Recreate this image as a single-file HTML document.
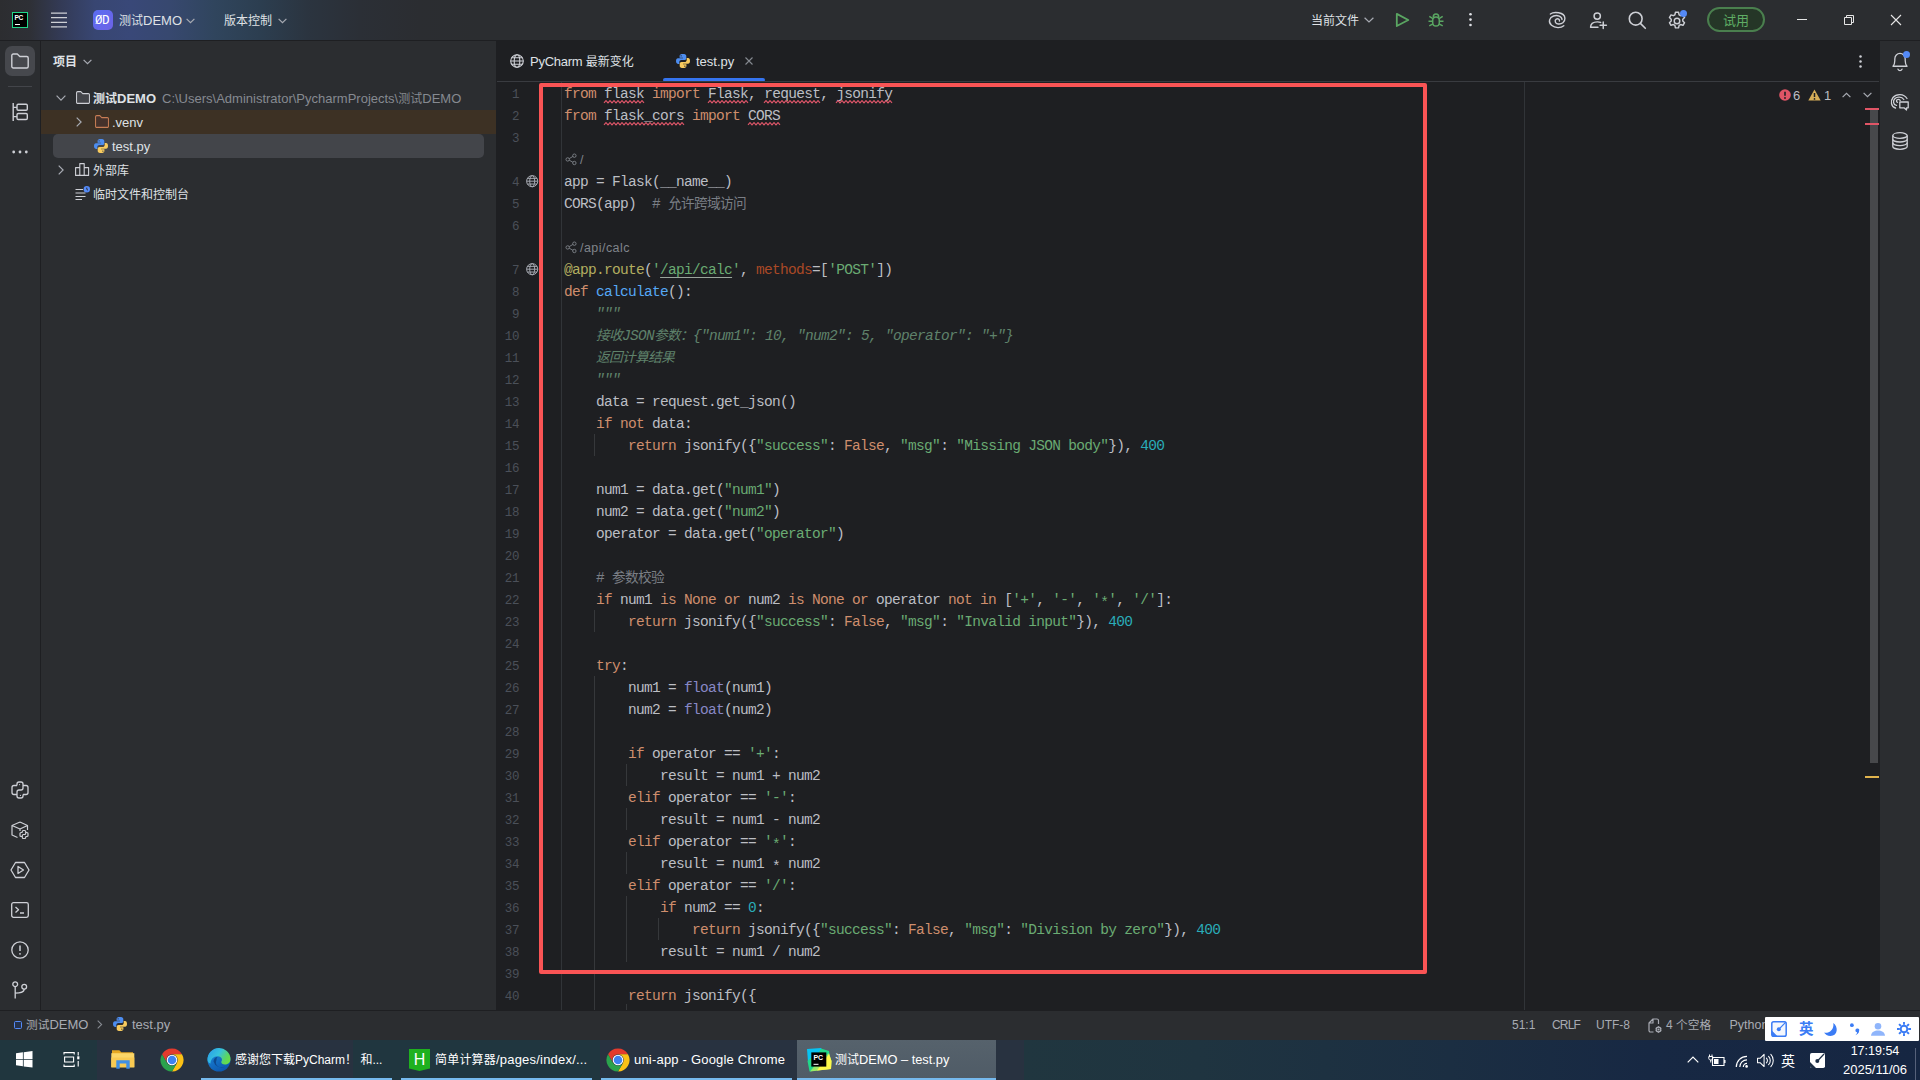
<!DOCTYPE html>
<html lang="zh-CN"><head><meta charset="utf-8"><title>测试DEMO – test.py</title>
<style>
*{box-sizing:border-box;margin:0;padding:0}
html,body{width:1920px;height:1080px;overflow:hidden;background:#1e1f22}
body{position:relative;font-family:"Liberation Sans","Noto Sans CJK SC",sans-serif;font-size:13px;color:#dfe1e5;-webkit-font-smoothing:antialiased}
.abs{position:absolute}
svg{position:absolute;overflow:visible}
.t{position:absolute;white-space:nowrap;line-height:20px}
#titlebar{position:absolute;left:0;top:0;width:1920px;height:40px;background:#2b2d30;overflow:hidden}
#titlebar .glow{position:absolute;left:0;top:0;width:480px;height:40px;background:linear-gradient(90deg,#2c2d30 0,#2e3036 30px,#333a55 60px,#384672 95px,#394878 130px,#37486f 170px,#30455d 215px,#2c3e50 260px,#2b343f 310px,#2b2f36 360px,#2b2d31 420px,#2b2d30 480px)}
#leftstripe{position:absolute;left:0;top:40px;width:41px;height:970px;background:#2b2d30;border-right:1px solid #1e1f22}
#project{position:absolute;left:41px;top:40px;width:455px;height:970px;background:#2b2d30}
#editor{position:absolute;left:496px;top:40px;width:1384px;height:970px;background:#1e1f22}
#rightstripe{position:absolute;left:1880px;top:40px;width:40px;height:970px;background:#2b2d30}
#statusbar{position:absolute;left:0;top:1010px;width:1920px;height:30px;background:#2b2d30;border-top:1px solid #1e1f22;color:#9da0a8}
#taskbar{position:absolute;left:0;top:1040px;width:1920px;height:40px;background:linear-gradient(90deg,#20363f 0,#20363f 1024px,#1f3440 1200px,#1b2e42 1450px,#172843 1650px,#162642 1920px);color:#fff;font-size:12px}
/* code */
.ln{position:absolute;left:495px;width:24px;margin-top:2px;text-align:right;font-family:"Liberation Mono",monospace;font-size:12.5px;letter-spacing:-.4px;line-height:22px;height:22px;color:#4b5059}
.cl{position:absolute;left:564px;margin-top:1px;font-family:"Liberation Mono","Noto Sans CJK SC",monospace;font-size:14.5px;letter-spacing:-.7px;line-height:22px;height:22px;white-space:pre;color:#bcbec4}
.k{color:#cf8e6d}.s{color:#6aab73}.n{color:#2aacb8}.f{color:#56a8f5}.c{color:#7a7e85}.d{color:#5f826b;font-style:italic}.b{color:#8888c6}.dec{color:#b3ae60}.p{color:#aa4926}
.w{}
.u{text-decoration:underline;text-decoration-color:#9aa59c;text-decoration-thickness:1px;text-underline-offset:3px}
.hint{position:absolute;left:564px;margin-top:1px;font-size:12.500px;letter-spacing:.45px;line-height:22px;height:22px;color:#80848b;white-space:pre}
.guide{position:absolute;width:1px;background:#36383b}
.z{font-size:12px}
#statusbar .z{font-size:11.700px}
.z2{font-size:12px}
.cj{font-size:13.7px}
#hline{position:absolute;left:0;top:40px;width:1920px;height:1px;background:#1e1f22;z-index:3}
.wave{position:absolute;height:4px;fill:none;stroke:#dd5669;stroke-width:1.150;stroke-linejoin:miter}
#trial .z{font-size:13px}
.nz .z{font-size:inherit}
.ast{position:relative;top:2.500px}

</style></head>
<body>
<div id="titlebar">
  <div class="glow"></div>
  <!-- PyCharm logo -->
  <div class="abs" style="left:12px;top:12px;width:16px;height:16px;background:#000;border:1.4px solid #21d789"></div>
  <div class="t" style="left:14.4px;top:13.6px;font-size:6.6px;line-height:8px;font-weight:700;color:#fff;letter-spacing:-.2px">PC</div>
  <div class="abs" style="left:15px;top:24px;width:5px;height:1px;background:#fff"></div>
  <!-- hamburger -->
  <svg style="left:51px;top:12px" width="16" height="16" viewBox="0 0 16 16" stroke="#ced0d6" stroke-width="1.2" fill="none"><path d="M0 1.2H16M0 5.7H16M0 10.3H16M0 14.8H16"/></svg>
  <!-- project badge -->
  <div class="abs" style="left:93px;top:10px;width:20px;height:20px;border-radius:5px;background:linear-gradient(135deg,#5a6cf2,#6d63e6)"></div>
  <div class="t" style="left:95px;top:11px;font-family:'Liberation Mono',monospace;font-size:12.500px;font-weight:400;color:#fff;letter-spacing:-.5px;line-height:20px">ØD</div>
  <div class="t" style="left:119px;top:11px;font-size:13px;color:#dfe1e5"><span class="z">测试</span>DEMO</div>
  <svg style="left:186px;top:17.500px" width="9" height="6" viewBox="0 0 9 6" stroke="#a8abb3" stroke-width="1.2" fill="none"><path d="M.6.8 4.5 4.7 8.4.8"/></svg>
  <div class="t" style="left:224px;top:11px;font-size:13px;color:#dfe1e5"><span class="z">版本控制</span></div>
  <svg style="left:278px;top:17.500px" width="9" height="6" viewBox="0 0 9 6" stroke="#a8abb3" stroke-width="1.2" fill="none"><path d="M.6.8 4.5 4.7 8.4.8"/></svg>

  <!-- right side -->
  <div class="t" style="left:1311px;top:11px;font-size:12.5px;color:#dfe1e5"><span class="z">当前文件</span></div>
  <svg style="left:1364px;top:17px" width="10" height="6" viewBox="0 0 10 6" stroke="#a8abb3" stroke-width="1.2" fill="none"><path d="M.6.7 5 5 9.4.7"/></svg>
  <!-- run -->
  <svg style="left:1395px;top:12px" width="16" height="16" viewBox="0 0 16 16" stroke="#5aa662" stroke-width="1.800" fill="none" stroke-linejoin="round"><path d="M1.800 1.900 13.300 8 1.800 14Z"/></svg>
  <!-- debug -->
  <svg style="left:1428px;top:12px" width="16" height="16" viewBox="0 0 16 16" stroke="#5aa662" stroke-width="1.500" fill="none" stroke-linecap="butt"><path d="M4.700 8.300A3.300 3.300 0 0 1 11.300 8.300V10.800A3.300 3.300 0 0 1 4.700 10.800Z"/><path d="M5.300 4.900A2.700 3 0 0 1 10.700 4.900"/><path d="M1.300 4.300 4.900 6.600M14.700 4.300 11.100 6.600M.5 9.300H4.700M15.500 9.300H11.300M1.300 13.900 4.900 11.900M14.700 13.900 11.100 11.900"/></svg>
  <!-- kebab -->
  <svg style="left:1468.500px;top:13.300px" width="3" height="14" viewBox="0 0 3 14" fill="#dfe1e5"><circle cx="1.500" cy="1.300" r="1.300"/><circle cx="1.500" cy="6.600" r="1.300"/><circle cx="1.500" cy="12" r="1.300"/></svg>
  <!-- AI swirl -->
  <svg style="left:1548px;top:12px" width="18" height="16" viewBox="0 0 18 16" stroke="#ced0d6" stroke-width="1.400" fill="none" stroke-linecap="round"><path d="M2.400 2C5.500 -.3 16.500 -.3 16.900 6.300 17.100 10.300 13.600 12.400 10.300 12 7.200 11.600 6.200 8.400 8.300 7.100 10 6.100 12 7.300 11.400 9"/><path d="M15.800 13.800C13 16.200 7 16.300 3.500 13.300 -.2 10.100 1.500 5.300 5.500 4 9.500 2.700 14 4.300 14 7.600"/></svg>
  <!-- add user -->
  <svg style="left:1589px;top:10.500px" width="19" height="19" viewBox="0 0 18 18" stroke="#ced0d6" stroke-width="1.400" fill="none" stroke-linecap="round"><circle cx="7.800" cy="4.800" r="3"/><path d="M1.500 15.500C1.500 11.500 5 10.300 8 10.300 9.300 10.300 10.300 10.500 11 10.800M1.500 15.500H8.500"/><path d="M13.500 10.500V16.500M10.500 13.500H16.500"/></svg>
  <!-- search -->
  <svg style="left:1628px;top:11px" width="18" height="18" viewBox="0 0 18 18" stroke="#ced0d6" stroke-width="1.600" fill="none" stroke-linecap="round"><circle cx="7.700" cy="7.700" r="6.400"/><path d="M12.400 12.400 17.300 17.300"/></svg>
  <!-- settings -->
  <svg style="left:1667px;top:11px" width="20" height="20" viewBox="0 0 18 18" stroke="#ced0d6" stroke-width="1.300" fill="none" stroke-linejoin="round"><circle cx="9" cy="9" r="2.500"/><path d="M7.600 1.200h2.800l.5 2.200 1.400.8 2.100-.7 1.400 2.400-1.600 1.500v1.600l1.600 1.500-1.400 2.400-2.100-.7-1.400.8-.5 2.200H7.600l-.5-2.200-1.400-.8-2.100.7-1.400-2.400 1.600-1.500V7.400L2.200 5.900l1.400-2.400 2.100.7 1.400-.8Z"/></svg>
  <div class="abs" style="left:1680px;top:10px;width:7px;height:7px;border-radius:50%;background:#548af7"></div>
  <!-- trial -->
  <div class="abs" style="left:1707px;top:7px;width:58px;height:25px;border-radius:13px;border:2px solid #4a7f4e;background:#253627"></div>
  <div class="t" id="trial" style="left:1707px;top:10.500px;width:58px;text-align:center;font-size:13px;color:#5fad65"><span class="z">试用</span></div>
  <!-- window controls -->
  <div class="abs" style="left:1797px;top:19px;width:10px;height:1px;background:#e6e6e6"></div>
  <svg style="left:1844px;top:15px" width="10" height="10" viewBox="0 0 10 10" stroke="#e6e6e6" stroke-width="1" fill="none"><path d="M.5 2.500H7.500V9.500H.5ZM2.500 2.500V.5H9.500V7.500H7.500"/></svg>
  <svg style="left:1891px;top:15px" width="10" height="10" viewBox="0 0 10 10" stroke="#e6e6e6" stroke-width="1.1" fill="none"><path d="M0 0 10 10M10 0 0 10"/></svg>
</div>

<div id="leftstripe">
  <div class="abs" style="left:5px;top:6px;width:30px;height:30px;border-radius:7px;background:#46484d"></div>
  <!-- folder -->
  <svg style="left:11px;top:13px" width="18" height="16" viewBox="0 0 18 16" stroke="#ced0d6" stroke-width="1.4" fill="none" stroke-linejoin="round"><path d="M.8 2.500A1.500 1.500 0 0 1 2.300 1H6.300L8.800 3.500H15.700A1.500 1.500 0 0 1 17.200 5V13.500A1.500 1.500 0 0 1 15.700 15H2.300A1.500 1.500 0 0 1 .8 13.500Z"/></svg>
  <div class="abs" style="left:8px;top:46px;width:24px;height:1px;background:#43454a"></div>
  <!-- structure -->
  <svg style="left:12px;top:63px" width="16" height="18" viewBox="0 0 16 18" stroke="#ced0d6" stroke-width="1.400" fill="none" stroke-linejoin="round"><path d="M1.200 0V18M1.200 4.400H5M1.200 13.600H5"/><rect x="5" y="1.300" width="10.300" height="6" rx="1.200"/><rect x="5" y="10.500" width="10.300" height="6" rx="1.200"/></svg>
  <!-- more -->
  <svg style="left:12px;top:110px" width="16" height="4" viewBox="0 0 16 4" fill="#ced0d6"><circle cx="1.700" cy="2" r="1.400"/><circle cx="8" cy="2" r="1.400"/><circle cx="14.300" cy="2" r="1.400"/></svg>

  <!-- python console -->
  <svg style="left:11px;top:741px" width="18" height="18" viewBox="0 0 18 18" stroke="#ced0d6" stroke-width="1.300" fill="none" stroke-linejoin="round"><path d="M6 4.500V3A2 2 0 0 1 8 1H10A2 2 0 0 1 12 3V7A2 2 0 0 1 10 9H8A2 2 0 0 0 6 11V15A2 2 0 0 0 8 17H10A2 2 0 0 0 12 15V13.500"/><path d="M6 4.500H3A2 2 0 0 0 1 6.500V11.500A2 2 0 0 0 3 13.500H6M12 4.500H15A2 2 0 0 1 17 6.500V11.500A2 2 0 0 1 15 13.500H12"/><circle cx="8.600" cy="3.600" r=".6" fill="#ced0d6" stroke="none"/><circle cx="9.400" cy="14.400" r=".6" fill="#ced0d6" stroke="none"/></svg>
  <!-- python packages -->
  <svg style="left:11px;top:781px" width="19" height="19" viewBox="0 0 19 19" stroke="#ced0d6" stroke-width="1.200" fill="none" stroke-linejoin="round"><path d="M9 1 16.500 4.500V9M9 1 1 4.500V14L6.500 16.500M1 4.500 9 8 16.500 4.500M9 8V10"/><path d="M11.300 11.500V10.500A1 1 0 0 1 12.300 9.500H13.700A1 1 0 0 1 14.700 10.500V12.500A1 1 0 0 1 13.700 13.500H12.300A1 1 0 0 0 11.300 14.500V16.500A1 1 0 0 0 12.300 17.500H13.700A1 1 0 0 0 14.700 16.500V15.500M11.300 11.500H10A1 1 0 0 0 9 12.500V14.500A1 1 0 0 0 10 15.500H11.300M14.700 11.500H16A1 1 0 0 1 17 12.500V14.500A1 1 0 0 1 16 15.500H14.700"/></svg>
  <!-- services -->
  <svg style="left:10px;top:821px" width="20" height="18" viewBox="0 0 20 18" stroke="#ced0d6" stroke-width="1.300" fill="none" stroke-linejoin="round"><path d="M5.500 1.500H14.500L19 9 14.500 16.500H5.500L1 9Z"/><path d="M8 5.500 13.500 9 8 12.500Z"/></svg>
  <!-- terminal -->
  <svg style="left:11px;top:862px" width="18" height="16" viewBox="0 0 18 16" stroke="#ced0d6" stroke-width="1.300" fill="none" stroke-linejoin="round"><rect x=".7" y=".7" width="16.600" height="14.600" rx="1.800"/><path d="M4.500 5 7.500 7.700 4.500 10.400M9 11H13"/></svg>
  <!-- problems -->
  <svg style="left:11px;top:901px" width="18" height="18" viewBox="0 0 18 18" stroke="#ced0d6" stroke-width="1.300" fill="none"><circle cx="9" cy="9" r="8.200"/><path d="M9 4.500V10" stroke-width="1.500"/><circle cx="9" cy="12.800" r=".9" fill="#ced0d6" stroke="none"/></svg>
  <!-- git -->
  <svg style="left:12px;top:941px" width="16" height="18" viewBox="0 0 16 18" stroke="#ced0d6" stroke-width="1.300" fill="none"><circle cx="3.200" cy="3.200" r="2.400"/><circle cx="12.200" cy="5.700" r="2.400"/><path d="M3.200 5.600V17.500M12.200 8.100C12.200 11.500 8 12.200 3.200 12.200"/></svg>
</div>

<div id="project">
  <div class="t" style="left:12px;top:12px;font-size:13px;font-weight:700;color:#dfe1e5"><span class="z">项目</span></div>
  <svg style="left:42px;top:19px" width="9" height="6" viewBox="0 0 9 6" stroke="#a8abb3" stroke-width="1.200" fill="none"><path d="M.6.8 4.500 4.700 8.400.8"/></svg>

  <!-- row 1: root -->
  <svg style="left:15px;top:55px" width="10" height="6" viewBox="0 0 10 6" stroke="#a8abb3" stroke-width="1.200" fill="none"><path d="M.6.7 5 5.100 9.400.7"/></svg>
  <svg style="left:35px;top:51px" width="14" height="13" viewBox="0 0 15 13" preserveAspectRatio="none" stroke="#ced0d6" stroke-width="1.100" fill="#43454a" stroke-linejoin="round"><path d="M.6 1.800A1.200 1.200 0 0 1 1.800.6H5.200L7.200 2.600H13.200A1.200 1.200 0 0 1 14.400 3.800V11.200A1.200 1.200 0 0 1 13.200 12.400H1.800A1.200 1.200 0 0 1 .6 11.200Z"/></svg>
  <div class="t" style="left:52px;top:49px;font-size:13px;font-weight:700;color:#dfe1e5"><span class="z">测试</span>DEMO</div>
  <div class="t" style="left:121px;top:49px;font-size:13px;color:#868a91">C:\Users\Administrator\PycharmProjects\<span class="z">测试</span>DEMO</div>

  <!-- row 2: .venv -->
  <div class="abs" style="left:0;top:70px;width:455px;height:24px;background:#3d3124"></div>
  <svg style="left:35px;top:77px" width="6" height="10" viewBox="0 0 6 10" stroke="#a8abb3" stroke-width="1.200" fill="none"><path d="M.7.6 5.100 5 .7 9.400"/></svg>
  <svg style="left:54px;top:75px" width="14" height="13" viewBox="0 0 15 13" preserveAspectRatio="none" stroke="#c77d55" stroke-width="1.100" fill="#45322b" stroke-linejoin="round"><path d="M.6 1.800A1.200 1.200 0 0 1 1.800.6H5.200L7.200 2.600H13.200A1.200 1.200 0 0 1 14.400 3.800V11.200A1.200 1.200 0 0 1 13.200 12.400H1.800A1.200 1.200 0 0 1 .6 11.200Z"/></svg>
  <div class="t" style="left:71px;top:73px;font-size:13px;color:#dfe1e5">.venv</div>

  <!-- row 3: test.py selected -->
  <div class="abs" style="left:12px;top:94px;width:431px;height:24px;border-radius:5px;background:#43454a"></div>
  <svg style="left:52px;top:98px" width="16" height="16" viewBox="0 0 16 16"><use href="#pyicon"/></svg>
  <div class="t" style="left:71px;top:97px;font-size:13px;color:#dfe1e5">test.py</div>

  <!-- row 4: external libs -->
  <svg style="left:17px;top:125px" width="6" height="10" viewBox="0 0 6 10" stroke="#a8abb3" stroke-width="1.200" fill="none"><path d="M.7.6 5.100 5 .7 9.400"/></svg>
  <svg style="left:34px;top:123px" width="15" height="13" viewBox="0 0 15 13" stroke="#ced0d6" stroke-width="1.100" fill="none" stroke-linejoin="round"><path d="M.6 4.600H4.800V12.400H.6ZM4.800.6H9.200V12.400H4.800ZM9.200 4.600H13.600V12.400H9.200Z"/></svg>
  <div class="t" style="left:52px;top:121px;font-size:13px;color:#dfe1e5"><span class="z">外部库</span></div>

  <!-- row 5: scratches -->
  <svg style="left:34px;top:146px" width="16" height="14" viewBox="0 0 16 14" stroke="#ced0d6" stroke-width="1.100" fill="none"><path d="M.5 3.500H8M.5 7H10.500M.5 10.500H10.500M.5 13.500H7"/><circle cx="11.800" cy="3.200" r="3.200" fill="#548af7" stroke="none"/><path d="M11.800 1.600V3.400L13 4.200" stroke="#2b2d30" stroke-width="1"/></svg>
  <div class="t" style="left:52px;top:145px;font-size:13px;color:#dfe1e5"><span class="z">临时文件和控制台</span></div>
</div>
<svg width="0" height="0" style="left:0;top:0"><defs>
<g id="pyicon">
<path d="M7.900 1C5.900 1 4.600 1.500 4.600 3V4.700H8V5.300H3C1.600 5.300 1 6.500 1 8.100 1 9.700 1.600 10.900 3 10.900H4.300V9.100C4.300 7.900 5.300 7 6.500 7H9.500C10.500 7 11.300 6.200 11.300 5.200V3C11.300 1.600 9.900 1 7.900 1ZM6.100 2.200A.65.650 0 1 1 6.100 3.500.65.650 0 0 1 6.100 2.200Z" fill="#4d8df0"/>
<path d="M8.100 15C10.100 15 11.400 14.500 11.400 13V11.300H8V10.700H13C14.400 10.700 15 9.500 15 7.900 15 6.300 14.400 5.100 13 5.100H11.700V6.900C11.700 8.100 10.700 9 9.500 9H6.500C5.500 9 4.700 9.800 4.700 10.800V13C4.700 14.400 6.100 15 8.100 15ZM9.900 13.800A.65.650 0 1 1 9.900 12.500.65.650 0 0 1 9.900 13.800Z" fill="#f8cb5e"/>
</g>
<g id="globe" fill="none" stroke-width="1.100"><circle cx="7" cy="7" r="6.300"/><ellipse cx="7" cy="7" rx="2.800" ry="6.300"/><path d="M.7 7H13.300M1.500 3.800H12.500M1.500 10.200H12.500"/></g>
</defs></svg>

<div id="editor">
  <!-- tabs -->
  <svg style="left:14px;top:14px" width="14" height="14" viewBox="0 0 14 14" stroke="#ced0d6"><use href="#globe"/></svg>
  <div class="t" style="left:34px;top:12px;font-size:13px;color:#dfe1e5"><span style="letter-spacing:-.25px">PyCharm </span><span class="z">最新变化</span></div>
  <svg style="left:179px;top:13px" width="16" height="16" viewBox="0 0 16 16"><use href="#pyicon"/></svg>
  <div class="t" style="left:200px;top:12px;font-size:13px;color:#dfe1e5">test.py</div>
  <svg style="left:249px;top:17px" width="8" height="8" viewBox="0 0 8 8" stroke="#868a91" stroke-width="1.100" fill="none"><path d="M.5.5 7.500 7.500M7.500.5 .5 7.500"/></svg>
  <div class="abs" style="left:167px;top:38px;width:102px;height:4px;border-radius:2px;background:#3574f0"></div>
  <div class="abs" style="left:1px;top:41px;width:1382px;height:1px;background:#393b40"></div>
  <!-- tab kebab -->
  <svg style="left:1362.500px;top:14.700px" width="3" height="13" viewBox="0 0 3 13" fill="#ced0d6"><circle cx="1.500" cy="1.500" r="1.250"/><circle cx="1.500" cy="6.500" r="1.250"/><circle cx="1.500" cy="11.500" r="1.250"/></svg>
  <!-- gutter line, margin line -->
  <div class="abs" style="left:65px;top:42px;width:1px;height:928px;background:#313438"></div>
  <div class="abs" style="left:1028px;top:42px;width:1px;height:928px;background:#313438"></div>
  <!-- inspections widget -->
  <svg style="left:1283px;top:49px" width="12" height="12" viewBox="0 0 12 12"><circle cx="6" cy="6" r="5.800" fill="#e05566"/><path d="M6 2.700V6.800" stroke="#1e1f22" stroke-width="1.600"/><circle cx="6" cy="9" r=".9" fill="#1e1f22"/></svg>
  <div class="t" style="left:1297px;top:46px;font-size:13px;color:#bcbec4">6</div>
  <svg style="left:1312px;top:49px" width="13" height="12" viewBox="0 0 13 12"><path d="M6.500 .4 12.700 11.600H.3Z" fill="#d6ae58"/><path d="M6.500 4V8" stroke="#1e1f22" stroke-width="1.500"/><circle cx="6.500" cy="9.900" r=".85" fill="#1e1f22"/></svg>
  <div class="t" style="left:1328px;top:46px;font-size:13px;color:#bcbec4">1</div>
  <svg style="left:1346px;top:52px" width="9" height="6" viewBox="0 0 9 6" stroke="#a8abb3" stroke-width="1.200" fill="none"><path d="M.6 5.200 4.500 1.300 8.400 5.200"/></svg>
  <svg style="left:1367px;top:52px" width="9" height="6" viewBox="0 0 9 6" stroke="#a8abb3" stroke-width="1.200" fill="none"><path d="M.6.8 4.500 4.700 8.400.8"/></svg>
  <!-- scrollbar -->
  <div class="abs" style="left:1374px;top:70px;width:8px;height:653px;background:#47484b"></div>
  <div class="abs" style="left:1369px;top:68px;width:14px;height:2px;background:#e05566"></div>
  <div class="abs" style="left:1369px;top:83px;width:14px;height:2px;background:#e05566"></div>
  <div class="abs" style="left:1369px;top:736px;width:14px;height:2px;background:#e0b34d"></div>
  <!-- gutter globes -->
  <svg style="left:30px;top:135px" width="12.400" height="12.400" viewBox="0 0 14 14" stroke="#a8abb3"><use href="#globe"/></svg>
  <svg style="left:30px;top:223px" width="12.400" height="12.400" viewBox="0 0 14 14" stroke="#a8abb3"><use href="#globe"/></svg>
</div>

<!-- indent guides -->
<div class="guide" style="left:594px;top:434px;height:22px"></div>
<div class="guide" style="left:594px;top:610px;height:22px"></div>
<div class="guide" style="left:594px;top:676px;height:334px"></div>
<div class="guide" style="left:626px;top:764px;height:22px"></div>
<div class="guide" style="left:626px;top:808px;height:22px"></div>
<div class="guide" style="left:626px;top:852px;height:22px"></div>
<div class="guide" style="left:626px;top:896px;height:66px"></div>
<div class="guide" style="left:658px;top:918px;height:22px"></div>
<div class="guide" style="left:626px;top:1004px;height:6px"></div>
<!-- red annotation -->
<div class="abs" style="left:539px;top:83px;width:888px;height:891px;border:4px solid #fa5455;border-radius:2px;z-index:5"></div>

<div id="rightstripe">
  <!-- bell -->
  <svg style="left:11px;top:11px" width="18" height="20" viewBox="0 0 18 19" preserveAspectRatio="none" stroke="#ced0d6" stroke-width="1.300" fill="none" stroke-linejoin="round" stroke-linecap="round"><path d="M2 14.500C3.500 13 3.800 11.500 3.800 9V7.500A5.200 5.200 0 0 1 14.200 7.500V9C14.200 11.500 14.500 13 16 14.500Z"/><path d="M7 17.300A2.200 2.200 0 0 0 11 17.300"/></svg>
  <div class="abs" style="left:23px;top:11px;width:7px;height:7px;border-radius:50%;background:#548af7"></div>
  <!-- AI chat -->
  <svg style="left:10px;top:52px" width="20" height="19" viewBox="0 0 20 19" stroke="#ced0d6" stroke-width="1.300" fill="none" stroke-linecap="round" stroke-linejoin="round"><path d="M7.500 10.300C5.800 9.700 6.200 7.300 8.300 7.300 9.300 7.300 10 7.800 10.200 8.500"/><path d="M6.500 13.300C3 12.800 2.800 8.600 4.800 6.700 7 4.600 11.800 4.600 13.800 7.500"/><path d="M5.500 16C1 15 .2 9 3 5.500 6.300 1.500 13.800 1.300 17 6.500"/><path d="M9.800 10H18.200V15.800H16.500V18L14 15.800H9.800Z"/></svg>
  <!-- database -->
  <svg style="left:12px;top:92px" width="16" height="18" viewBox="0 0 16 18" stroke="#ced0d6" stroke-width="1.300" fill="none"><ellipse cx="8" cy="3.500" rx="7.200" ry="2.800"/><path d="M.8 3.500V14.500C.8 16 4 17.300 8 17.300S15.200 16 15.200 14.500V3.500"/><path d="M.8 7.200C.8 8.700 4 10 8 10S15.200 8.700 15.200 7.200M.8 10.800C.8 12.300 4 13.600 8 13.600S15.200 12.300 15.200 10.800"/></svg>
</div>

<div id="statusbar">
  <div class="abs" style="left:14px;top:10px;width:8px;height:8px;border:1.200px solid #548af7;border-radius:1.500px;background:#25324d"></div>
  <div class="t" style="left:26px;top:4px;font-size:13px;color:#a8abb3"><span class="z">测试</span>DEMO</div>
  <svg style="left:96.500px;top:8.500px" width="5.500" height="9" viewBox="0 0 6 10" stroke="#868a91" stroke-width="1.200" fill="none"><path d="M.7.6 5.100 5 .7 9.400"/></svg>
  <svg style="left:112px;top:5px" width="16" height="16" viewBox="0 0 16 16"><use href="#pyicon"/></svg>
  <div class="t" style="left:132px;top:4px;font-size:13px;color:#a8abb3">test.py</div>
  <div class="t" style="left:1512px;top:4px;font-size:12px;color:#a8abb3">51:1</div>
  <div class="t" style="left:1552px;top:4px;font-size:12px;letter-spacing:-.8px;color:#a8abb3">CRLF</div>
  <div class="t" style="left:1596px;top:4px;font-size:12px;color:#a8abb3">UTF-8</div>
  <svg style="left:1648px;top:7px" width="15" height="16" viewBox="0 0 15 16" stroke="#a8abb3" stroke-width="1.200" fill="none" stroke-linejoin="round"><path d="M10.500 6V2.500A1.500 1.500 0 0 0 9 1H5L1 5V12.500A1.500 1.500 0 0 0 2.500 14H5.500M5 1V5H1"/><circle cx="10.500" cy="11.500" r="2.300"/><circle cx="10.500" cy="11.500" r=".5"/><path d="M10.500 8.300V9.200M10.500 13.800V14.700M7.700 10 8.500 10.400M12.500 12.600 13.300 13M7.700 13 8.500 12.600M12.500 10.400 13.300 10"/></svg>
  <div class="t" style="left:1666px;top:4px;font-size:12px;color:#a8abb3">4 <span class="z">个空格</span></div>
  <div class="t" style="left:1729.500px;top:4px;font-size:12.500px;color:#a8abb3">Python</div>
</div>
<!-- IME floating bar -->
<div class="abs" style="left:1765px;top:1017px;width:154px;height:24px;background:#fff;border-radius:1px;z-index:9">
  <svg style="left:6px;top:4px" width="16" height="16" viewBox="0 0 16 16"><rect x=".8" y=".8" width="14.400" height="14.400" rx="1.800" fill="#f4f7fd" stroke="#3b7cf5" stroke-width="1.500"/><path d="M.8 9.500 6.500 15.200H2.500A1.700 1.700 0 0 1 .8 13.500Z" fill="#3b7cf5"/><path d="M14.800 1.200 8 8.200" stroke="#3b7cf5" stroke-width="1.200"/><circle cx="7.800" cy="8.300" r="2" fill="#3b7cf5"/></svg>
  <div class="t nz" style="left:34px;top:1px;font-size:14.500px;font-weight:700;color:#3b7cf5;line-height:20px;font-family:'Noto Sans CJK SC',sans-serif"><span class="z">英</span></div>
  <svg style="left:59px;top:5.800px" width="13" height="13" viewBox="0 0 13 13"><path d="M9.300 0C14.500 3.500 14 13 6.500 13 3.500 13 1.200 11.500 0 9.600 4 10.800 10.500 7.500 9.300 0Z" fill="#3b7cf5"/></svg>
  <svg style="left:84px;top:4px" width="12" height="16" viewBox="0 0 12 16" fill="#3b7cf5"><circle cx="2.900" cy="4.200" r="1.900"/><path d="M6.400 9.400A1.900 1.900 0 1 1 10.100 10C10 12 8.500 13.600 6.300 14.200 7.600 13.200 8.100 12.300 8 11.300A1.900 1.900 0 0 1 6.400 9.400Z"/></svg>
  <svg style="left:106px;top:4px" width="14" height="16" viewBox="0 0 14 16" fill="#8fb5fb"><circle cx="7" cy="5.200" r="3.300"/><path d="M0 14.700C.5 11 3.500 9.600 7 9.600S13.500 11 14 14.700Z"/></svg>
  <svg style="left:132px;top:5px" width="14" height="14" viewBox="0 0 14 14" fill="none" stroke="#3b7cf5"><circle cx="7" cy="7" r="3.300" stroke-width="1.900"/><path d="M7 0V2.800M7 11.200V14M0 7H2.800M11.200 7H14M2.050 2.050 4 4M10 10 11.950 11.950M2.050 11.950 4 10M10 4 11.950 2.050" stroke-width="1.900"/></svg>
</div>

<div id="taskbar">
  <div class="abs" style="left:0;top:0;width:97px;height:40px;background:#20363e"></div>
  <div class="abs" style="left:97px;top:0;width:256px;height:40px;background:#283240"></div>
  <div class="abs" style="left:600px;top:0;width:424px;height:40px;background:#283240"></div>
  <div class="abs" style="left:1915px;top:8px;width:1px;height:32px;background:#56617a"></div>
  <!-- windows logo -->
  <svg style="left:16px;top:11px" width="17" height="17" viewBox="0 0 17 17" fill="#fff"><path d="M0 2.300 6.900 1.300V7.900H0ZM7.700 1.200 16.500 0V7.900H7.700ZM0 8.700H6.900V15.300L0 14.300ZM7.700 8.700H16.500V16.600L7.700 15.400Z"/></svg>
  <!-- task view -->
  <svg style="left:63px;top:12px" width="17" height="15" viewBox="0 0 17 15" stroke="#fff" stroke-width="1.100" fill="none"><path d="M1 2.600V.6H11.200V2.600M1 12.400V14.400H11.200V12.400M1.600 5H10.600V10H1.600ZM15.200 0V3.500M15.200 9V14.500"/><rect x="14.200" y="4.300" width="2.200" height="3" fill="#fff" stroke="none"/></svg>
  <!-- explorer -->
  <svg style="left:111px;top:9px" width="24" height="21" viewBox="0 0 24 21"><path d="M1 1.200H8.300L10.300 3.200H22V6H1Z" fill="#e5a823"/><path d="M.3 4.200H23.300V18.300H.3Z" fill="#fbd668"/><path d="M.3 8.500H23.300V18.300H.3Z" fill="#f9ca52"/><path d="M5.300 11.300H18.700V19.800H15.300V14.500H8.700V19.800H5.300Z" fill="#3f8fe4"/></svg>
  <!-- chrome 1 -->
  <svg style="left:160px;top:8px" width="24" height="24" viewBox="0 0 24 24"><use href="#chrome"/></svg>
  <!-- edge item -->
  <svg style="left:207px;top:8px" width="24" height="24" viewBox="0 0 24 24"><defs><linearGradient id="eg1" x1="0" y1=".2" x2="1" y2=".7"><stop offset="0" stop-color="#2a9fe8"/><stop offset=".45" stop-color="#36c2dc"/><stop offset=".8" stop-color="#5bd661"/><stop offset="1" stop-color="#6ade45"/></linearGradient><linearGradient id="eg2" x1="0" y1="0" x2=".6" y2="1"><stop offset="0" stop-color="#1c8ee2"/><stop offset="1" stop-color="#0d58ae"/></linearGradient></defs><circle cx="12" cy="12" r="11.500" fill="url(#eg2)"/><path d="M.5 12A11.500 11.500 0 0 1 23.500 11C23.500 15 20.500 16.500 18 16.500 15.500 16.500 14.300 15.500 14.300 14.300 14.300 13.300 15 13 15 11.800 15 9.800 13 8.300 10.500 8.300 6.500 8.300 3.500 11.500 3.500 15.500 1.800 15 .5 13.500 .5 12Z" fill="url(#eg1)"/><path d="M9.500 12A5.500 5.500 0 0 0 18 18.500 8 8 0 0 1 6.500 13.500C6.500 11 8.500 9 10.500 9 9.800 9.800 9.500 10.800 9.500 12Z" fill="#0d4a8f"/></svg>
  <div class="t" style="left:235px;top:10px;font-size:12px;color:#fff"><span class="z">感谢您下载</span>PyCharm<span class="z">！</span> <span class="z">和</span>...</div>
  <div class="abs" style="left:201px;top:38px;width:191px;height:2px;background:#76b9ed"></div>
  <!-- hbuilder item -->
  <svg style="left:409px;top:9px" width="21" height="22" viewBox="0 0 21 22"><path d="M0 0H21V19.500L10.500 22 0 19.500Z" fill="#1fb11f"/></svg>
  <div class="t" style="left:409px;top:10px;width:21px;text-align:center;font-size:16px;color:#fff;line-height:19px">H</div>
  <div class="t" style="left:435px;top:10px;font-size:13px;letter-spacing:.2px;color:#fff"><span class="z">简单计算器</span>/pages/index/...</div>
  <div class="abs" style="left:401px;top:38px;width:191px;height:2px;background:#76b9ed"></div>
  <!-- chrome item -->
  <svg style="left:606px;top:8px" width="24" height="24" viewBox="0 0 24 24"><use href="#chrome"/></svg>
  <div class="t" style="left:634px;top:10px;font-size:13px;letter-spacing:.2px;color:#fff">uni-app - Google Chrome</div>
  <div class="abs" style="left:601px;top:38px;width:191px;height:2px;background:#76b9ed"></div>
  <!-- pycharm active -->
  <div class="abs" style="left:797px;top:0;width:199px;height:40px;background:linear-gradient(180deg,#56626c,#4f5b66)"></div>
  <div class="abs" style="left:797px;top:38px;width:199px;height:2px;background:#76b9ed"></div>
  <svg style="left:807px;top:8px" width="25" height="24" viewBox="0 0 25 24"><defs><linearGradient id="pg1" x1="0" y1="0" x2="1" y2="1"><stop offset="0" stop-color="#21d789"/><stop offset="1" stop-color="#fcf84a"/></linearGradient></defs><path d="M0 1 14 0 17 5 4 13 1 14Z" fill="#07c3f2"/><path d="M14 .5 22 3 23 12 10 8ZM.5 13 6 8 12 22 2.500 23.500Z" fill="#21d789"/><path d="M22 5 24.500 13 24 21 3 23.500 9 16Z" fill="url(#pg1)"/><path d="M22 6 24.500 13 24 21 10 22.500Z" fill="#fcf84a"/><rect x="4.300" y="4.400" width="15" height="14.200" fill="#000"/><rect x="6.500" y="15.800" width="5" height="1" fill="#fff"/></svg>
  <div class="t" style="left:813.500px;top:14px;font-size:7px;font-weight:700;color:#fff;line-height:8px;letter-spacing:-.2px">PC</div>
  <div class="t" style="left:835px;top:10px;font-size:12.800px;color:#fff"><span class="z">测试</span>DEMO – test.py</div>

  <!-- tray -->
  <svg style="left:1687px;top:16px" width="12" height="7" viewBox="0 0 12 7" stroke="#fff" stroke-width="1.200" fill="none"><path d="M.7 6.300 6 1 11.300 6.300"/></svg>
  <svg style="left:1708px;top:13.500px" width="18" height="13" viewBox="0 0 18 13" stroke="#fff" stroke-width="1.100" fill="none"><path d="M4.500 3.500H16V11.500H4.500Z"/><path d="M16.800 6V9" stroke-width="1.400"/><path d="M6 5H10.500V10H6Z" fill="#fff" stroke="none"/><path d="M1.500 .5V2.500M4 .5V2.500M.8 2.500H4.700V4.500C4.700 6.500 .8 6.500 .8 4.500ZM2.750 6V8.500" stroke-width="1"/></svg>
  <svg style="left:1735px;top:14.500px" width="14" height="13" viewBox="0 0 14 13" stroke="#fff" stroke-width="1.200" fill="none" stroke-linecap="butt"><path d="M8.300 12A3.700 3.700 0 0 1 12 8.300M4.800 12A7.200 7.200 0 0 1 12 4.800M1.300 12A10.700 10.700 0 0 1 12 1.300"/><circle cx="11.600" cy="11.400" r="1.300" fill="#fff" stroke="none"/></svg>
  <svg style="left:1756px;top:12.500px" width="19" height="15" viewBox="0 0 19 16" stroke="#fff" stroke-width="1.100" fill="none" stroke-linecap="round"><path d="M1 5.500H4L8 1.500V14.500L4 10.500H1Z" stroke-linejoin="round"/><path d="M10.500 5.500A3.500 3.500 0 0 1 10.500 10.500M12.800 3.500A6.500 6.500 0 0 1 12.800 12.500M15.200 1.500A9.500 9.500 0 0 1 15.200 14.500"/></svg>
  <div class="t nz" style="left:1781px;top:10px;font-size:14px;color:#fff;font-family:'Noto Sans CJK SC',sans-serif"><span class="z">英</span></div>
  <svg style="left:1810px;top:13px" width="15" height="15" viewBox="0 0 15 15"><rect x="0" y="0" width="15" height="15" rx="1.800" fill="#fff"/><path d="M0 9 6 15H1.800A1.800 1.800 0 0 1 0 13.200Z" fill="#1b2d45"/><path d="M14 1 7.500 8" stroke="#1b2d45" stroke-width="1.200"/><circle cx="7.300" cy="8" r="2" fill="#1b2d45"/></svg>
  <div class="t" style="left:1835px;top:1px;width:80px;text-align:center;font-size:12.500px;color:#fff">17:19:54</div>
  <div class="t" style="left:1835px;top:19.500px;width:80px;text-align:center;font-size:13px;color:#fff">2025/11/06</div>
</div>
<svg width="0" height="0" style="left:0;top:0"><defs>
<g id="chrome"><path d="M2.040 6.250A11.500 11.500 0 0 1 21.960 6.250L12 6.250A5.750 5.750 0 0 0 7.020 14.875Z" fill="#e33b2e"/><path d="M21.960 6.250A11.500 11.500 0 0 1 12 23.500L16.980 14.875A5.750 5.750 0 0 0 12 6.250Z" fill="#fbc116"/><path d="M12 23.500A11.500 11.500 0 0 1 2.040 6.250L7.020 14.875A5.750 5.750 0 0 0 16.980 14.875Z" fill="#2ba24c"/><circle cx="12" cy="12" r="5.300" fill="#fff"/><circle cx="12" cy="12" r="4.250" fill="#3e82f1"/></g>
</defs></svg>

<div id="code">
<div class="ln" style="top:82px">1</div>
<div class="cl" style="top:82px"><span class="k">from</span> <span class="w">flask</span> <span class="k">import</span> <span class="w">Flask</span>, <span class="w">request</span>, <span class="w">jsonify</span></div>
<div class="ln" style="top:104px">2</div>
<div class="cl" style="top:104px"><span class="k">from</span> <span class="w">flask_cors</span> <span class="k">import</span> <span class="w">CORS</span></div>
<div class="ln" style="top:126px">3</div>
<div class="hint" style="top:148px"><svg width="12.500" height="12.500" viewBox="0 0 14 14" style="left:1px;top:4px" fill="none" stroke="#80848b" stroke-width="1"><circle cx="10.5" cy="3" r="1.9"/><circle cx="3" cy="7.2" r="1.9"/><circle cx="10.5" cy="11.2" r="1.9"/><path d="M4.7 6.3 8.8 3.9M4.7 8.1 8.8 10.3"/></svg><span style="margin-left:16px">/</span></div>
<div class="ln" style="top:170px">4</div>
<div class="cl" style="top:170px">app = Flask(__name__)</div>
<div class="ln" style="top:192px">5</div>
<div class="cl" style="top:192px">CORS(app)  <span class="c"># <span class="cj">允许跨域访问</span></span></div>
<div class="ln" style="top:214px">6</div>
<div class="hint" style="top:236px"><svg width="12.500" height="12.500" viewBox="0 0 14 14" style="left:1px;top:4px" fill="none" stroke="#80848b" stroke-width="1"><circle cx="10.5" cy="3" r="1.9"/><circle cx="3" cy="7.2" r="1.9"/><circle cx="10.5" cy="11.2" r="1.9"/><path d="M4.7 6.3 8.8 3.9M4.7 8.1 8.8 10.3"/></svg><span style="margin-left:16px">/api/calc</span></div>
<div class="ln" style="top:258px">7</div>
<div class="cl" style="top:258px"><span class="dec">@app.route</span>(<span class="s">'<span class="u">/api/calc</span>'</span>, <span class="p">methods</span>=[<span class="s">'POST'</span>])</div>
<div class="ln" style="top:280px">8</div>
<div class="cl" style="top:280px"><span class="k">def</span> <span class="f">calculate</span>():</div>
<div class="ln" style="top:302px">9</div>
<div class="cl" style="top:302px">    <span class="d">"""</span></div>
<div class="ln" style="top:324px">10</div>
<div class="cl" style="top:324px">    <span class="d"><span class="cj">接收</span>JSON<span class="cj">参数：</span>{"num1": 10, "num2": 5, "operator": "+"}</span></div>
<div class="ln" style="top:346px">11</div>
<div class="cl" style="top:346px">    <span class="d"><span class="cj">返回计算结果</span></span></div>
<div class="ln" style="top:368px">12</div>
<div class="cl" style="top:368px">    <span class="d">"""</span></div>
<div class="ln" style="top:390px">13</div>
<div class="cl" style="top:390px">    data = request.get_json()</div>
<div class="ln" style="top:412px">14</div>
<div class="cl" style="top:412px">    <span class="k">if not</span> data<span>:</span></div>
<div class="ln" style="top:434px">15</div>
<div class="cl" style="top:434px">        <span class="k">return</span> jsonify({<span class="s">"success"</span>: <span class="k">False</span>, <span class="s">"msg"</span>: <span class="s">"Missing JSON body"</span>}), <span class="n">400</span></div>
<div class="ln" style="top:456px">16</div>
<div class="ln" style="top:478px">17</div>
<div class="cl" style="top:478px">    num1 = data.get(<span class="s">"num1"</span>)</div>
<div class="ln" style="top:500px">18</div>
<div class="cl" style="top:500px">    num2 = data.get(<span class="s">"num2"</span>)</div>
<div class="ln" style="top:522px">19</div>
<div class="cl" style="top:522px">    operator = data.get(<span class="s">"operator"</span>)</div>
<div class="ln" style="top:544px">20</div>
<div class="ln" style="top:566px">21</div>
<div class="cl" style="top:566px">    <span class="c"># <span class="cj">参数校验</span></span></div>
<div class="ln" style="top:588px">22</div>
<div class="cl" style="top:588px">    <span class="k">if</span> num1 <span class="k">is None or</span> num2 <span class="k">is None or</span> operator <span class="k">not in</span> [<span class="s">'+'</span>, <span class="s">'-'</span>, <span class="s">'<span class="ast">*</span>'</span>, <span class="s">'/'</span>]:</div>
<div class="ln" style="top:610px">23</div>
<div class="cl" style="top:610px">        <span class="k">return</span> jsonify({<span class="s">"success"</span>: <span class="k">False</span>, <span class="s">"msg"</span>: <span class="s">"Invalid input"</span>}), <span class="n">400</span></div>
<div class="ln" style="top:632px">24</div>
<div class="ln" style="top:654px">25</div>
<div class="cl" style="top:654px">    <span class="k">try</span>:</div>
<div class="ln" style="top:676px">26</div>
<div class="cl" style="top:676px">        num1 = <span class="b">float</span>(num1)</div>
<div class="ln" style="top:698px">27</div>
<div class="cl" style="top:698px">        num2 = <span class="b">float</span>(num2)</div>
<div class="ln" style="top:720px">28</div>
<div class="ln" style="top:742px">29</div>
<div class="cl" style="top:742px">        <span class="k">if</span> operator == <span class="s">'+'</span>:</div>
<div class="ln" style="top:764px">30</div>
<div class="cl" style="top:764px">            result = num1 + num2</div>
<div class="ln" style="top:786px">31</div>
<div class="cl" style="top:786px">        <span class="k">elif</span> operator == <span class="s">'-'</span>:</div>
<div class="ln" style="top:808px">32</div>
<div class="cl" style="top:808px">            result = num1 - num2</div>
<div class="ln" style="top:830px">33</div>
<div class="cl" style="top:830px">        <span class="k">elif</span> operator == <span class="s">'<span class="ast">*</span>'</span>:</div>
<div class="ln" style="top:852px">34</div>
<div class="cl" style="top:852px">            result = num1 <span class="ast">*</span> num2</div>
<div class="ln" style="top:874px">35</div>
<div class="cl" style="top:874px">        <span class="k">elif</span> operator == <span class="s">'/'</span>:</div>
<div class="ln" style="top:896px">36</div>
<div class="cl" style="top:896px">            <span class="k">if</span> num2 == <span class="n">0</span>:</div>
<div class="ln" style="top:918px">37</div>
<div class="cl" style="top:918px">                <span class="k">return</span> jsonify({<span class="s">"success"</span>: <span class="k">False</span>, <span class="s">"msg"</span>: <span class="s">"Division by zero"</span>}), <span class="n">400</span></div>
<div class="ln" style="top:940px">38</div>
<div class="cl" style="top:940px">            result = num1 / num2</div>
<div class="ln" style="top:962px">39</div>
<div class="ln" style="top:984px">40</div>
<div class="cl" style="top:984px">        <span class="k">return</span> jsonify({</div>
<svg class="wave" style="left:604px;top:100px" width="40" height="4" viewBox="0 0 40 4"><polyline points="0,2.9 2,0.7 4,2.9 6,0.7 8,2.9 10,0.7 12,2.9 14,0.7 16,2.9 18,0.7 20,2.9 22,0.7 24,2.9 26,0.7 28,2.9 30,0.7 32,2.9 34,0.7 36,2.9 38,0.7 40,2.9"/></svg>
<svg class="wave" style="left:708px;top:100px" width="40" height="4" viewBox="0 0 40 4"><polyline points="0,2.9 2,0.7 4,2.9 6,0.7 8,2.9 10,0.7 12,2.9 14,0.7 16,2.9 18,0.7 20,2.9 22,0.7 24,2.9 26,0.7 28,2.9 30,0.7 32,2.9 34,0.7 36,2.9 38,0.7 40,2.9"/></svg>
<svg class="wave" style="left:764px;top:100px" width="56" height="4" viewBox="0 0 56 4"><polyline points="0,2.9 2,0.7 4,2.9 6,0.7 8,2.9 10,0.7 12,2.9 14,0.7 16,2.9 18,0.7 20,2.9 22,0.7 24,2.9 26,0.7 28,2.9 30,0.7 32,2.9 34,0.7 36,2.9 38,0.7 40,2.9 42,0.7 44,2.9 46,0.7 48,2.9 50,0.7 52,2.9 54,0.7 56,2.9"/></svg>
<svg class="wave" style="left:836px;top:100px" width="56" height="4" viewBox="0 0 56 4"><polyline points="0,2.9 2,0.7 4,2.9 6,0.7 8,2.9 10,0.7 12,2.9 14,0.7 16,2.9 18,0.7 20,2.9 22,0.7 24,2.9 26,0.7 28,2.9 30,0.7 32,2.9 34,0.7 36,2.9 38,0.7 40,2.9 42,0.7 44,2.9 46,0.7 48,2.9 50,0.7 52,2.9 54,0.7 56,2.9"/></svg>
<svg class="wave" style="left:604px;top:122px" width="80" height="4" viewBox="0 0 80 4"><polyline points="0,2.9 2,0.7 4,2.9 6,0.7 8,2.9 10,0.7 12,2.9 14,0.7 16,2.9 18,0.7 20,2.9 22,0.7 24,2.9 26,0.7 28,2.9 30,0.7 32,2.9 34,0.7 36,2.9 38,0.7 40,2.9 42,0.7 44,2.9 46,0.7 48,2.9 50,0.7 52,2.9 54,0.7 56,2.9 58,0.7 60,2.9 62,0.7 64,2.9 66,0.7 68,2.9 70,0.7 72,2.9 74,0.7 76,2.9 78,0.7 80,2.9"/></svg>
<svg class="wave" style="left:748px;top:122px" width="32" height="4" viewBox="0 0 32 4"><polyline points="0,2.9 2,0.7 4,2.9 6,0.7 8,2.9 10,0.7 12,2.9 14,0.7 16,2.9 18,0.7 20,2.9 22,0.7 24,2.9 26,0.7 28,2.9 30,0.7 32,2.9"/></svg>
</div>
<div id="hline"></div>
</body></html>
